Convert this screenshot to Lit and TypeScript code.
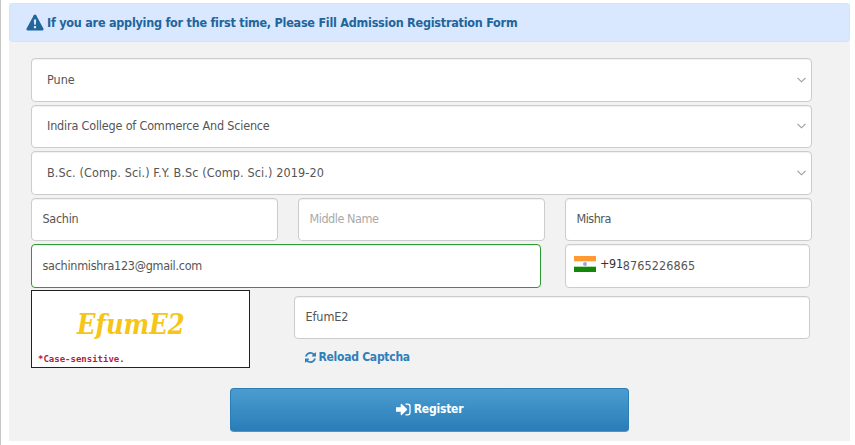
import { LitElement, html, css } from "lit";
import { customElement } from "lit/decorators.js";

const chevron = html`<svg class="chevron" width="9" height="6" viewBox="0 0 9 6"><path d="M.5 .8L4.5 4.8L8.5 .8" fill="none" stroke="#999" stroke-width="1.1"/></svg>`;

@customElement("app-root")
export class AppRoot extends LitElement {
  static styles = css`
    * { box-sizing: border-box; }
    :host {
      display: block;
      height: 445px;
      overflow: hidden;
      background: #fff;
      border-left: 1px solid #c6c6c6;
      padding: 3px 5px 0 8px;
      font: 12.5px/18px "DejaVu Sans Condensed", "DejaVu Sans", sans-serif;
      font-stretch: condensed;
      color: #555;
    }
    .panel { height: 438px; width: 841px; background: #f2f2f2; }
    .alert {
      display: flex;
      align-items: center;
      height: 39px;
      padding-left: 16px;
      background: #d9e8ff;
      border: 1px solid #c9e9f5;
      border-radius: 4px;
      color: #22659b;
      font-weight: 700;
    }
    .alert svg { margin-right: 3px; }
    .form { padding: 16px 0 0 22px; width: 804px; }
    .row { display: flex; }
    .box {
      display: flex;
      align-items: center;
      height: 43.5px;
      padding: 0 10.5px;
      background: #fff;
      border: 1px solid #ccc;
      border-radius: 4px;
      box-shadow: inset 0 1px 1px rgba(0, 0, 0, .06);
      white-space: nowrap;
    }
    .select { width: 781px; padding: 0 5px 0 15px; justify-content: space-between; margin-bottom: 3px; }
    .names { gap: 20px; margin-bottom: 3px; }
    .name { width: 247px; }
    .placeholder { color: #aaa; }
    .contact { gap: 24px; }
    .email { width: 510px; border-color: #2c9a35; }
    .phone { width: 245px; padding-left: 8px; }
    .flag { margin-right: 4px; margin-top: -3px; }
    .code { color: #333; margin-top: -3px; letter-spacing: -.3px; }
    .check { gap: 44px; margin-top: 2px; }
    .captcha {
      width: 219px;
      height: 78px;
      border: 1px solid #222;
      background: #fff;
      padding: 18px 0 0 6px;
    }
    .glyphs {
      padding-left: 39px;
      height: 44px;
      font: italic 700 27px/32px "DejaVu Serif Condensed", "DejaVu Serif", serif;
      font-stretch: condensed;
      color: #f6c516;
    }
    .hint { font: 700 9px/12px "DejaVu Sans Mono", monospace; color: #b5203c; white-space: nowrap; }
    .answer { width: 516px; margin-top: 6px; }
    .reload {
      display: flex;
      align-items: center;
      gap: 3px;
      margin: 9px 0 0 10.5px;
      color: #2f7fbb;
      font-weight: 700;
      font-size: 12px;
    }
    .submit {
      display: flex;
      align-items: center;
      justify-content: center;
      gap: 3px;
      width: 399px;
      height: 44px;
      margin: 20px 0 0 199px;
      padding: 0 0 1px;
      border: 1px solid #2b7db5;
      border-bottom-color: #4a98ca;
      border-radius: 4px;
      background: linear-gradient(#4b9dd0, #297db8);
      color: #fff;
      font: 700 12px/18px "DejaVu Sans Condensed", "DejaVu Sans", sans-serif;
      font-stretch: condensed;
    }
    .t-title { letter-spacing: -.245px; }
    .t-college { letter-spacing: -.18px; }
    .t-course { letter-spacing: .12px; }
    .t-first { letter-spacing: -.3px; }
    .t-middle { letter-spacing: -.45px; }
    .t-last { letter-spacing: -.5px; }
    .t-email { letter-spacing: -.28px; }
    .t-phone { letter-spacing: .1px; }
    .t-answer { letter-spacing: -.1px; }
    .t-reload { letter-spacing: -.26px; }
    .t-register { letter-spacing: -.2px; }
  `;

  render() {
    return html`
      <main class="panel">
        <div class="alert">
          <svg width="18" height="17" viewBox="0 0 18 17"><path d="M9 .5Q9.8 .5 10.2 1.2L17.4 14.5Q18 16.3 16.4 16.5H1.6Q0 16.3 .6 14.5L7.8 1.2Q8.2 .5 9 .5Z" fill="#22659b"/><path d="M7.8 5.5H10.2L9.8 10.8H8.2ZM7.9 12H10.1V14.2H7.9Z" fill="#d9e8ff"/></svg>
          <span class="t-title">If you are applying for the first time, Please Fill Admission Registration Form</span>
        </div>
        <div class="form">
          <div class="box select"><span class="t-city">Pune</span>${chevron}</div>
          <div class="box select"><span class="t-college">Indira College of Commerce And Science</span>${chevron}</div>
          <div class="box select"><span class="t-course">B.Sc. (Comp. Sci.) F.Y. B.Sc (Comp. Sci.) 2019-20</span>${chevron}</div>
          <div class="row names">
            <div class="box name"><span class="t-first">Sachin</span></div>
            <div class="box name placeholder"><span class="t-middle">Middle Name</span></div>
            <div class="box name"><span class="t-last">Mishra</span></div>
          </div>
          <div class="row contact">
            <div class="box email"><span class="t-email">sachinmishra123@gmail.com</span></div>
            <div class="box phone">
              <svg class="flag" width="22" height="16" viewBox="0 0 22 16"><path fill="#fff" d="M0 0H22V16H0Z"/><path fill="#ff9933" d="M0 0H22V5.3H0Z"/><path fill="#138808" d="M0 10.7H22V16H0Z"/><circle cx="11" cy="8" r="2" fill="#a5a5dc"/></svg>
              <span class="code">+91</span><span class="t-phone">8765226865</span>
            </div>
          </div>
          <div class="row check">
            <div class="captcha">
              <div class="glyphs">EfumE2</div>
              <div class="hint">*Case-sensitive.</div>
            </div>
            <div>
              <div class="box answer"><span class="t-answer">EfumE2</span></div>
              <div class="reload">
                <svg width="11" height="11" viewBox="0 0 1536 1536"><path fill="currentColor" d="M1511 928q0 5-1 7-64 268-268 434.500T764 1536q-146 0-282.500-55T238 1324l-129 129q-19 19-45 19t-45-19-19-45V960q0-26 19-45t45-19h448q26 0 45 19t19 45-19 45l-137 137q71 66 161 102t187 36q134 0 250-65t186-179q11-17 53-117 8-23 30-23h192q13 0 22.500 9.500T1511 928zM1536 128v448q0 26-19 45t-45 19h-448q-26 0-45-19t-19-45 19-45l138-138Q969 256 768 256q-134 0-250 65T332 500q-11 17-53 117-8 23-30 23H50q-13 0-22.500-9.500T18 608v-7q65-268 270-434.500T768 0q146 0 284 55.500T1297 212l130-129q19-19 45-19t45 19 19 45z"/></svg>
                <span class="t-reload">Reload Captcha</span>
              </div>
            </div>
          </div>
          <button class="submit">
            <svg width="15" height="13" viewBox="0 0 15 13"><path fill="#fff" d="M0 4.2H4.7V1.3Q5 .5 5.8 1L11 6.1Q11.3 6.5 11 6.9L5.8 12Q5 12.5 4.7 11.7V8.8H0Z"/><path fill="none" stroke="#fff" stroke-width="1.3" d="M9.5 1.2H11.6Q14 1.2 14 3.4V9.6Q14 11.8 11.6 11.8H9.5"/></svg>
            <span class="t-register">Register</span>
          </button>
        </div>
      </main>
    `;
  }
}
